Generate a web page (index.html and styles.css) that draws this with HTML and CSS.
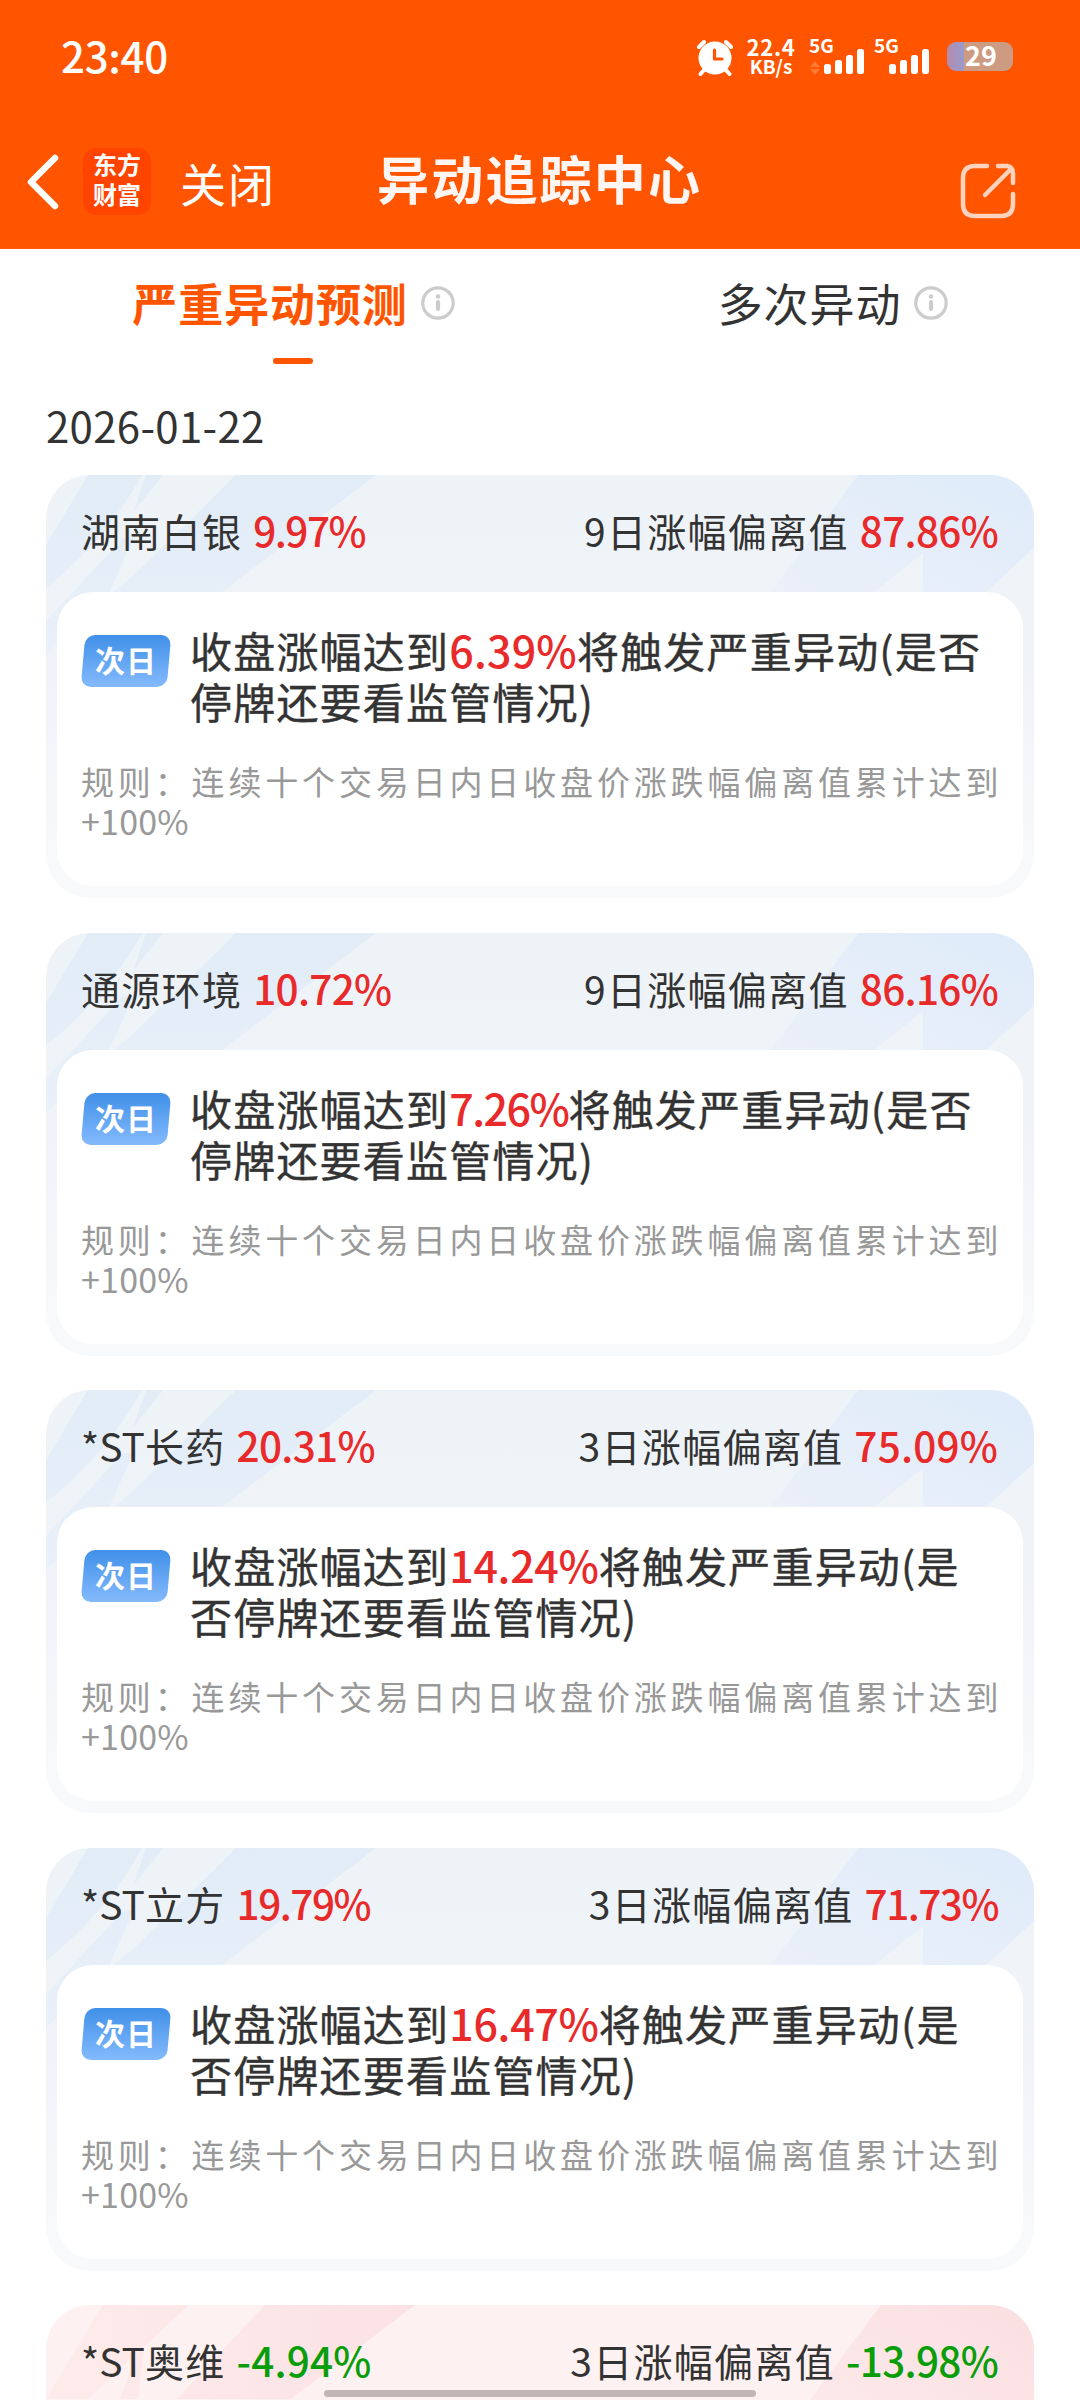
FILE: index.html
```html
<!DOCTYPE html>
<html lang="zh-CN">
<head>
<meta charset="utf-8">
<title>异动追踪中心</title>
<link rel="stylesheet" href="styles.css">
</head>
<body>
<svg class="defs" width="0" height="0" aria-hidden="true">
  <defs>
    <linearGradient id="blue" x1="0" y1="0" x2="0" y2="1"><stop offset="0" stop-color="#e1ecf7"/><stop offset="1" stop-color="#e9f0f9"/></linearGradient>
    <linearGradient id="blueRight" x1="1" y1="0" x2="0" y2="1"><stop offset="0" stop-color="#deebf9"/><stop offset="1" stop-color="#ebf0f9"/></linearGradient>
    <linearGradient id="pink" x1="0" y1="0" x2="1" y2="0"><stop offset="0" stop-color="#fdebea"/><stop offset="1" stop-color="#fce2e5"/></linearGradient>
    <linearGradient id="pinkRight" x1="1" y1="0" x2="0" y2="1"><stop offset="0" stop-color="#fbdfe1"/><stop offset="1" stop-color="#fdeeee"/></linearGradient>
    <symbol id="rays" viewBox="0 0 988 180">
      <path fill="url(#blue)" d="M42 0H96Q60 65 0 113V70ZM100 0H117L87 38ZM190 0H330L175 118L110 180H20L66 118L86 102ZM76 64L88 62L62 120L0 180V146Z"/>
      <path fill="url(#blueRight)" d="M812 0H988V73L939 118H877V78L827 118H724Z"/>
    </symbol>
    <symbol id="rays-pink" viewBox="0 0 988 180">
      <path fill="url(#pink)" d="M57 0H143L42 94H0ZM219 0H369L245 94H131ZM101 20L92 94H74Z"/>
      <path fill="url(#pinkRight)" d="M835 0H988V180H700Z"/>
    </symbol>
    <symbol id="info" viewBox="0 0 34 34">
      <circle cx="17" cy="17" r="15.2" fill="none" stroke="#ccc" stroke-width="3.2"/>
      <circle cx="17" cy="10.5" r="2.300" fill="#ccc"/><path d="M17 16V23" stroke="#ccc" stroke-width="4.200" stroke-linecap="round"/>
    </symbol>
    <symbol id="bars" viewBox="0 0 40 26">
      <g fill="#fff"><rect x="0" y="15" width="7" height="10" rx="2.5"/><rect x="11" y="11" width="7" height="14" rx="2.5"/><rect x="22" y="6" width="7" height="19" rx="2.5"/><rect x="33" y="0" width="7" height="25" rx="2.5"/></g>
    </symbol>
  </defs>
</svg>

<header class="header">
  <div class="status">
    <span class="clock">23:40</span>
    <div class="status-icons">
      <svg class="alarm" viewBox="0 0 38 38">
        <g stroke="#fff" stroke-width="4" stroke-linecap="round"><path d="M3 9L8 4M35 9L30 4M9 31L4.500 36M29 31L33.500 36"/></g>
        <circle cx="19" cy="20" r="16.500" fill="#fff"/><path d="M18.500 12V21H26" fill="none" stroke="#ff5500" stroke-width="3.200" stroke-linejoin="round" stroke-linecap="round"/>
      </svg>
      <div class="speed"><span class="speed-value">22.4</span><span class="speed-unit">KB/s</span></div>
      <div class="signal"><span>5G</span>
        <div class="signal-row"><svg class="arrows" viewBox="0 0 10 14"><path fill="#ff7a35" d="M5 0L10 6H0ZM5 14L0 8H10Z"/></svg><svg class="bars"><use href="#bars"/></svg></div></div>
      <div class="signal second"><span>5G</span><div class="signal-row"><svg class="bars"><use href="#bars"/></svg></div></div>
      <div class="battery">29</div>
    </div>
  </div>
  <nav class="navbar">
    <svg class="back" viewBox="0 0 34 56"><path d="M29 4L5 28L29 52" fill="none" stroke="#fff" stroke-width="6.500" stroke-linecap="round" stroke-linejoin="round"/></svg>
    <div class="logo"><span>东方</span><span>财富</span></div>
    <span class="close">关闭</span>
    <h1 class="title">异动追踪中心</h1>
    <svg class="share" viewBox="0 0 56 56"><path d="M27 3H15Q3 3 3 15V41Q3 53 15 53H41Q53 53 53 41V31M38 3H47Q53 4 53 10V20M25 32L51 6" fill="none" stroke="#ffd2bd" stroke-width="4.500" stroke-linecap="round"/></svg>
  </nav>
</header>

<div class="tabs">
  <div class="tab active"><span>严重异动预测</span><svg class="info"><use href="#info"/></svg></div>
  <div class="tab"><span>多次异动</span><svg class="info"><use href="#info"/></svg></div>
</div>

<main class="list">
  <time class="date">2026-01-22</time>

  <article class="card">
    <svg class="rays"><use href="#rays"/></svg>
    <div class="card-head"><p>湖南白银<b class="tight">9.97%</b></p><p>9日涨幅偏离值<b class="snug">87.86%</b></p></div>
    <div class="card-body">
      <div class="notice"><span class="badge"><i>次日</i></span><p>收盘涨幅达到<b class="wide">6.39%</b>将触发严重异动(是否<br>停牌还要看监管情况)</p></div>
      <p class="rule">规则：连续十个交易日内日收盘价涨跌幅偏离值累计达到<br><span>+100%</span></p>
    </div>
  </article>

  <article class="card">
    <svg class="rays"><use href="#rays"/></svg>
    <div class="card-head"><p>通源环境<b class="snug">10.72%</b></p><p>9日涨幅偏离值<b class="snug">86.16%</b></p></div>
    <div class="card-body">
      <div class="notice"><span class="badge"><i>次日</i></span><p>收盘涨幅达到<b class="tight">7.26%</b>将触发严重异动(是否<br>停牌还要看监管情况)</p></div>
      <p class="rule">规则：连续十个交易日内日收盘价涨跌幅偏离值累计达到<br><span>+100%</span></p>
    </div>
  </article>

  <article class="card">
    <svg class="rays"><use href="#rays"/></svg>
    <div class="card-head"><p><em>*ST</em>长药<b class="snug">20.31%</b></p><p>3日涨幅偏离值<b class="wide">75.09%</b></p></div>
    <div class="card-body">
      <div class="notice"><span class="badge"><i>次日</i></span><p>收盘涨幅达到<b class="even">14.24%</b>将触发严重异动(是<br>否停牌还要看监管情况)</p></div>
      <p class="rule">规则：连续十个交易日内日收盘价涨跌幅偏离值累计达到<br><span>+100%</span></p>
    </div>
  </article>

  <article class="card">
    <svg class="rays"><use href="#rays"/></svg>
    <div class="card-head"><p><em>*ST</em>立方<b class="tight">19.79%</b></p><p>3日涨幅偏离值<b class="tight">71.73%</b></p></div>
    <div class="card-body">
      <div class="notice"><span class="badge"><i>次日</i></span><p>收盘涨幅达到<b class="even">16.47%</b>将触发严重异动(是<br>否停牌还要看监管情况)</p></div>
      <p class="rule">规则：连续十个交易日内日收盘价涨跌幅偏离值累计达到<br><span>+100%</span></p>
    </div>
  </article>

  <article class="card falling">
    <svg class="rays"><use href="#rays-pink"/></svg>
    <div class="card-head"><p><em>*ST</em>奥维<b class="wide">-4.94%</b></p><p>3日涨幅偏离值<b class="snug">-13.98%</b></p></div>
  </article>
</main>
<div class="home-bar"></div>
</body>
</html>
```
FILE: styles.css
```css
* { box-sizing: border-box; margin: 0; padding: 0; }
body {
  width: 1080px; height: 2400px; overflow: hidden; position: relative;
  background: #fff; color: #333;
  font-family: "Noto Sans CJK SC", sans-serif;
  white-space: nowrap;
}
b, i { font-weight: 500; font-style: normal; }
em { font-style: normal; letter-spacing: 0; }
.defs { position: absolute; }

.header { height: 249px; background: #ff5500; color: #fff; }
.status { height: 114px; padding: 0 67px 0 61px; display: flex; justify-content: space-between; align-items: center; }
.clock { font-size: 42px; font-weight: 500; line-height: 60px; letter-spacing: -0.3px; margin-top: -4px; }
.status-icons { display: flex; height: 38px; align-items: flex-start; margin-top: 0; }
.alarm { width: 38px; height: 38px; margin-right: 14px; }
.speed { width: 46px; margin-right: 15px; display: flex; flex-direction: column; align-items: center; font-weight: 700; }
.speed-value { font-size: 22px; line-height: 20px; margin-top: -2px; letter-spacing: 0.7px; }
.speed-unit { font-size: 19px; line-height: 19px; }
.signal { width: 65px; font-size: 19px; font-weight: 700; }
.signal span { display: block; line-height: 18px; height: 11px; margin-top: -2px; margin-bottom: 1px; }
.signal-row { display: flex; align-items: flex-end; height: 27px; gap: 4px; padding-left: 1px; }
.arrows { width: 10px; height: 14px; }
.bars { width: 40px; height: 26px; }
.second { width: 73px; }
.second .signal-row { padding-left: 15px; }
.battery {
  width: 66px; height: 29px; margin-top: 4px; border-radius: 9px; text-align: center;
  background: linear-gradient(90deg, #b58bac, #989bcd 17px, #cd9b82 17px);
  font-size: 27px; line-height: 26px; font-weight: 700; padding-left: 2px;
}

.navbar { height: 135px; display: flex; align-items: center; padding: 0 64px 0 26px; }
.back { width: 34px; height: 56px; margin-right: 23px; }
.logo {
  width: 68px; height: 67px; border-radius: 13px; background: #ff4400;
  display: flex; flex-direction: column; align-items: center; padding-top: 1px;
  font-size: 24px; line-height: 30px; font-weight: 700;
}
.close { font-size: 46px; letter-spacing: 2px; margin-left: 29px; font-weight: 400; line-height: 60px; }
.title { font-size: 52px; letter-spacing: 2.2px; font-weight: 700; color: #fff5f2; line-height: 60px; margin: -7px 0 0 101px; }
.share { width: 56px; height: 56px; margin: 19px 0 0 auto; }

.tabs { display: flex; height: 133px; }
.tab { width: 540px; display: flex; justify-content: center; align-items: flex-start; padding: 24px 0 0 45px; font-size: 45px; line-height: 60px; letter-spacing: 0.9px; gap: 13px; position: relative; }
.tab:first-child { padding-left: 47px; }
.tab + .tab { padding-left: 46px; }
.info { width: 34px; height: 34px; margin-top: 13px; }
.active { color: #ff5500; font-weight: 700; }
.active::after { content: ""; position: absolute; left: 273px; top: 109px; width: 40px; height: 6px; border-radius: 3px; background: #ff5500; }

.list { height: 2018px; padding: 0 46px; display: flex; flex-direction: column; gap: 34.6px; }
.date { height: 58.400px; font-size: 42px; line-height: 86px; letter-spacing: 0.3px; }

.card { position: relative; height: 423px; border-radius: 44px; overflow: hidden; background: linear-gradient(#eef3f8, #f0f4f9 50%, #f7f9fb 90%); padding: 0 11px 12px; flex: none; }
.rays { position: absolute; left: 0; top: 0; width: 988px; height: 180px; }
.card-head { position: relative; height: 117px; padding: 0 25px 0 24px; display: flex; justify-content: space-between; font-size: 39px; letter-spacing: 1.3px; line-height: 109px; }
.card-head b { font-size: 40.500px; margin-left: 11px; color: #e92a2a; }
.card-body { position: relative; height: 294px; background: #fff; border-radius: 36px; padding: 32px 24px 0; }
.notice { display: flex; font-size: 42px; line-height: 51px; letter-spacing: 1.2px; font-weight: 400; }
.notice p { margin-left: 19px; -webkit-text-stroke: 0.4px; }
.notice b { font-size: 43px; color: #e92a2a; -webkit-text-stroke: 0; }
.badge { position: relative; width: 90px; height: 52px; margin-top: 11px; flex: none; color: #fff; font-size: 30px; line-height: 48px; text-align: center; }
.badge::before { content: ""; position: absolute; inset: 0 2px; border-radius: 10px; transform: skewX(-5deg); background: linear-gradient(#4090e8, #84bafd); }
.badge i { position: relative; font-weight: 700; letter-spacing: 1px; display: block; }
.rule { margin-top: 35px; font-size: 33px; line-height: 40px; letter-spacing: 3.85px; color: #999; }
.rule span { display: block; font-size: 34px; letter-spacing: 0.2px; }
b.tight { letter-spacing: -1.5px; }
b.snug { letter-spacing: -0.7px; }
b.even { letter-spacing: -0.3px; }
b.wide { letter-spacing: 0.2px; }
.falling { height: auto; flex: 1 1 0; min-height: 0; border-radius: 44px 44px 0 0; padding-bottom: 0; background: #fdf1f1; }
.falling .card-head { height: 94px; }
.falling .card-head b { color: #0a9d0a; }
.home-bar { position: absolute; left: 324px; top: 2390px; width: 432px; height: 7px; border-radius: 4px; background: #c2b6b7; }
```
